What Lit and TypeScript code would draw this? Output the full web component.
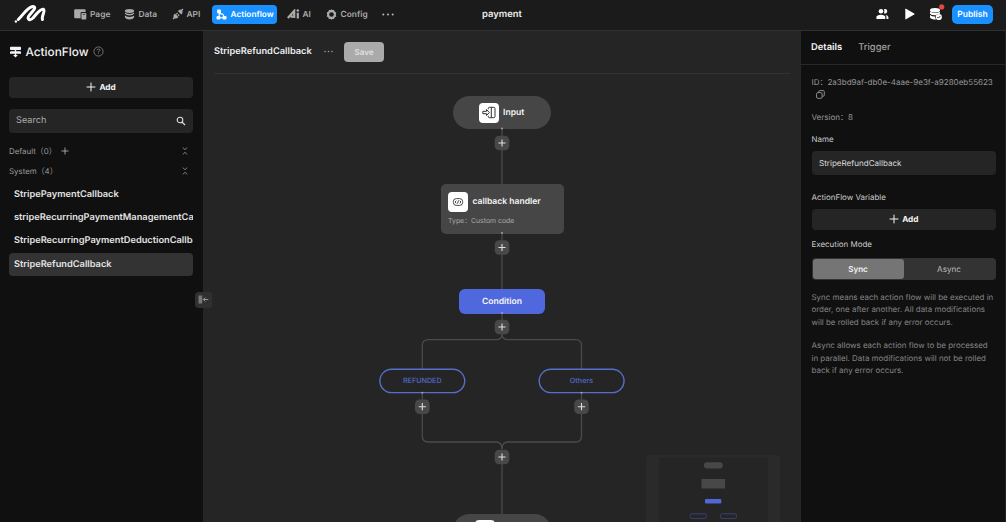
import { LitElement, html, svg, css } from "lit";
import { customElement, state } from "lit/decorators.js";
import { classMap } from "lit/directives/class-map.js";

const plus = (cls = "") => html`<svg class="plus ${cls}" viewBox="0 0 10 10"><path d="M5 .6V9.4M.6 5H9.4" stroke="currentColor" fill="none" /></svg>`;

const icons: Record<string, unknown> = {
  page: html`<svg width="13" height="11" viewBox="0 0 13 11" fill="#aaa"><path d="M1.2.3H10.6Q11.6.3 11.6 1.3V3H7.8Q6.6 3 6.6 4.2V9.2H1.2Q.2 9.2.2 8.200V1.300Q.2.3 1.200.3Z" /><path fill-rule="evenodd" d="M8.200 4H11.500Q12.300 4 12.300 4.800V9.800Q12.300 10.600 11.500 10.600H8.200Q7.400 10.600 7.400 9.800V4.800Q7.400 4 8.200 4ZM8.900 5.200V6H10.800V5.200Z" /></svg>`,
  data: html`<svg width="11" height="11" viewBox="0 0 11 11" fill="#aaa"><ellipse cx="5.500" cy="2" rx="4.600" ry="1.900" /><path d="M.9 3.500Q2.300 4.900 5.500 4.900T10.100 3.500V4.700Q8.900 6.500 5.500 6.500T.9 4.700ZM.9 6.500Q2.300 7.900 5.500 7.900T10.100 6.500V8.600Q8.900 10.600 5.500 10.600T.9 8.600Z" /></svg>`,
  api: html`<svg width="12" height="12" viewBox="0 0 12 12"><path d="M1 11L2.300 9.700M9.700 2.300L11 1M4.300 6.300L5.600 5M5.900 7.800L7.200 6.500" stroke="#aaa" stroke-width="1.200" /><path fill="#aaa" d="M3 5.600L6.400 9Q4.700 11.200 2.500 10.400L1.500 9.400Q.9 7.300 3 5.600ZM5.900 3.100Q7.600.9 9.700 1.700L10.400 2.400Q11.100 4.600 9.200 6.400Z" /></svg>`,
  flow: html`<svg width="11" height="11" viewBox="0 0 11 11"><path d="M3.200 3V8.700H8M3.200 4.600Q7.500 4.300 7.800 7.500" fill="none" stroke="#fff" stroke-width="1.100" /><g fill="#fff"><rect x="1" y=".6" width="4" height="3.600" rx="1" /><rect x=".5" y="7" width="4" height="3.500" rx="1" /><rect x="6.500" y="7" width="4" height="3.500" rx="1" /></g></svg>`,
  ai: html`<svg width="13" height="10" viewBox="0 0 13 10"><path d="M.8 9L7.200 1.900V9M3.600 7.600H6" fill="none" stroke="#aaa" stroke-width="2.200" /><path d="M10.800 3.700V9.500" stroke="#aaa" stroke-width="2.200" /><circle cx="10.800" cy="1.500" r="1.300" fill="#aaa" /></svg>`,
  config: html`<svg width="11" height="11" viewBox="0 0 11 11"><path d="M2.900 1L4.600 1L5.500.3L6.400 1H8.100L8.700 2.700L10.300 3.500L9.800 5.500L10.300 7.500L8.700 8.300L8.100 10H6.400L5.500 10.700L4.600 10H2.900L2.300 8.300L.7 7.500L1.200 5.500L.7 3.500L2.300 2.700Z" fill="#aaa" /><circle cx="5.500" cy="5.500" r="2.300" fill="#1b1b1b" /></svg>`,
};

const collapse = html`<svg class="collapse" width="6" height="8" viewBox="0 0 6 8"><path d="M.7.5L3 2.700L5.300.5M.7 7.500L3 5.300L5.300 7.500" fill="none" stroke="#999" stroke-width=".8" /></svg>`;

interface Spot { x: number; y: number }
const addSpots: Spot[] = [
  { x: 502, y: 143 }, { x: 502, y: 247.500 }, { x: 502, y: 327 },
  { x: 422.300, y: 406.700 }, { x: 581.500, y: 406.700 }, { x: 502, y: 457 },
];
const ports: Spot[] = [
  { x: 502, y: 128.500 }, { x: 502, y: 233 }, { x: 502, y: 313 },
  { x: 422.300, y: 392.700 }, { x: 581.500, y: 392.700 },
];

@customElement("app-root")
export class AppRoot extends LitElement {
  @state() private selected = 3;
  @state() private mode = "Sync";

  private nav = [
    ["page", "Page"], ["data", "Data"], ["api", "API"],
    ["flow", "Actionflow"], ["ai", "AI"], ["config", "Config"],
  ];
  private flows = [
    "StripePaymentCallback", "stripeRecurringPaymentManagementCallback",
    "StripeRecurringPaymentDeductionCallback", "StripeRefundCallback",
  ];

  static styles = css`
    :host { display: flex; flex-direction: column; width: 100%; height: 522px; overflow: hidden; background: #101010; color: #eee; text-rendering: geometricPrecision;
      font-family: Inter, "Noto Sans CJK SC", sans-serif; font-size: 8.5px; line-height: 12px; }
    * { box-sizing: border-box; }
    svg { display: block; flex: none; }
    header { flex: none; display: flex; align-items: center; height: 31px; padding-bottom: 2px; background: #1b1b1b; border-bottom: 1px solid #303030; white-space: nowrap; }
    .logo { margin-left: 14px; width: 33px; }
    .item { display: flex; align-items: center; height: 19px; gap: 3px; color: #a9a9a9; font-weight: 600; font-size: 8.400px; border-radius: 4px; }
    .item span, .title, .publish span, .save span { padding-top: 1px; }
    .item.page { margin-left: 27px; width: 50px; }
    .item.data { width: 48px; gap: 3.500px; }
    .item.api { width: 39px; gap: 2.500px; }
    .item.flow { width: 65px; padding-left: 4px; gap: 4px; margin-left: .5px; background: #1890ff; color: #fff; font-size: 8.300px; }
    .item.ai { margin-left: 10px; width: 39px; gap: 3px; }
    .item.config { width: 56px; gap: 4px; }
    .title { margin-left: 88.500px; width: 60px; font-size: 9.400px; font-weight: 600; color: #eee; }
    .tools { display: flex; align-items: center; margin-left: auto; padding-right: 13px; }
    .publish { display: flex; align-items: center; justify-content: center; width: 41px; height: 19px; border-radius: 5px; background: #1890ff; color: #fff; font-weight: 600; font-size: 8.500px; margin-left: 7px; }
    .body { flex: 1; display: flex; min-height: 0; }
    .left { flex: none; width: 203px; padding: 13px 10.500px 0 9px; display: flex; flex-direction: column; }
    .heading { display: flex; align-items: center; height: 15px; font-size: 11.800px; font-weight: 500; color: #f3f3f3; }
    .heading .label { margin: 0 5px 0 3.500px; width: 62px; white-space: nowrap; }
    .button { flex: none; display: flex; align-items: center; justify-content: center; gap: 3.500px; height: 21.500px; border-radius: 4px; background: #252525; color: #f5f5f5; font-weight: 700; font-size: 8.200px; }
    .plus { width: 10px; height: 10px; stroke-width: 1; }
    .left .button { margin-top: 17.500px; }
    .search { display: flex; align-items: center; justify-content: space-between; height: 24px; margin: 10.500px 0 8px; padding: 0 7px; border-radius: 4px; background: #252525; color: #aaa; font-size: 9.200px; }
    .search span { padding-top: 1px; }
    .group { display: flex; align-items: center; height: 20px; color: #9b9b9b; font-size: 7.900px; }
    .group .plus { width: 8px; height: 8px; margin-left: 4px; color: #bbb; }
    .group .collapse { margin-left: auto; margin-right: 5px; }
    .flows { margin-top: 2px; }
    .entry { height: 23.400px; line-height: 24.400px; padding-left: 5px; overflow: hidden; white-space: nowrap; border-radius: 4px; font-size: 9.250px; font-weight: 600; color: #e4e4e4; }
    .entry.on { background: #333; }
    .main { flex: 1; position: relative; min-width: 0; background: #252525; overflow: hidden; }
    .bar { display: flex; align-items: center; height: 42.500px; margin: 0 10px 0 11px; border-bottom: 1px solid #333; font-size: 9.280px; font-weight: 600; color: #eee; }
    .bar .name { width: 109.500px; padding-top: 1px; white-space: nowrap; }
    .save { display: flex; align-items: center; justify-content: center; width: 40px; height: 20px; margin-left: 11.500px; border-radius: 4px; background: #aaa; color: #ddd; font-size: 8px; font-weight: 700; }
    .canvas { position: absolute; left: -203px; top: -31px; width: 1006px; height: 522px; pointer-events: none; }
    .wires { position: absolute; inset: 0; }
    .node { position: absolute; display: flex; align-items: center; background: #464646; font-weight: 600; color: #f5f5f5; white-space: nowrap; }
    .tile { flex: none; display: flex; align-items: center; justify-content: center; width: 20px; height: 20px; border-radius: 4px; background: #fff; }
    .node b { font-weight: 600; padding-top: 1px; }
    .input { left: 453px; top: 96px; width: 98px; height: 33px; border-radius: 17px; padding-left: 25.500px; gap: 4.500px; font-size: 8.600px; }
    .handler { left: 440.500px; top: 184px; width: 123px; height: 49.500px; border-radius: 5px; flex-direction: column; align-items: flex-start; padding: 7.500px 7.500px 0; font-size: 8.550px; }
    .row { display: flex; align-items: center; gap: 4.500px; }
    .kind { margin-top: 3.500px; font-size: 6.900px; font-weight: 400; color: #aaa; }
    .condition { left: 459px; top: 289px; width: 86px; height: 24.500px; border-radius: 6px; justify-content: center; background: #4f68de; font-size: 8.600px; }
    .branch { top: 368.500px; width: 86px; height: 24.500px; justify-content: center; background: none; color: #4c62b9; font-size: 7.200px; }
    .refunded { left: 379.300px; }
    .others { left: 538.500px; }
    .output { left: 453px; top: 513.500px; width: 98px; height: 33px; border-radius: 17px; padding-left: 22px; }
    .mini { position: absolute; left: 646px; top: 455px; width: 134px; height: 72px; background: #2a2a2a; border-radius: 3px; }
    .handle { position: absolute; left: 195px; top: 291.500px; width: 16.500px; height: 16.500px; border-radius: 4px; background: #303030; display: flex; align-items: center; justify-content: center; }
    .right { flex: none; width: 206px; border-left: 1px solid #272727; border-right: 1px solid #242424; display: flex; flex-direction: column; }
    .tabs { display: flex; gap: 16px; height: 34px; padding: 11px 10px 0; border-bottom: 1.500px solid #282828; font-size: 9.400px; font-weight: 500; color: #a0a0a0; }
    .tabs .on { color: #f5f5f5; font-weight: 600; }
    .details { display: flex; flex-direction: column; padding: 11px 9.500px 0 10.500px; color: #999; font-size: 8.030px; }
    .id { white-space: nowrap; }
    .copy { margin: 2px 0 0 4px; }
    .version { margin-top: 11.500px; }
    .caption { color: #ccc; font-size: 7.950px; }
    .caption.name { margin-top: 10px; }
    .field { display: flex; align-items: center; height: 24px; margin: 6px 0 16px; padding-left: 7.500px; border-radius: 4px; background: #252525; color: #ddd; font-size: 8.050px; }
    .right .button { margin: 6px 0 8px; }
    .toggle { display: flex; height: 21.500px; margin-top: 8px; padding: 1px; border-radius: 4px; background: #333; color: #bbb; font-size: 8.100px; }
    .toggle div { flex: 1; display: flex; align-items: center; justify-content: center; border-radius: 3px; }
    .toggle .on { background: #757575; color: #f3f3f3; font-weight: 600; }
    .note { margin-top: 11px; line-height: 12.550px; color: #858585; font-size: 7.950px; white-space: nowrap; }
  `;

  private header() {
    return html`<header>
      <svg class="logo" width="33" height="21" viewBox="0 0 33 21" fill="none" stroke="#fff" stroke-linecap="round" stroke-linejoin="round">
        <path stroke-width="3" d="M4.300 15.500C10 10 14 2.300 19 2.400C24 3 17 8.500 14.500 12.500C13 15.800 16 16.800 19 14C22.500 10 26 4.500 29.300 5.200C32 6.500 27 12.500 28.500 15.500" />
        <circle cx="1.900" cy="17.500" r="1.200" stroke="none" fill="#fff" />
      </svg>
      ${this.nav.map(([id, label]) => html`<div class="item ${id}">${icons[id]}<span>${label}</span></div>`)}
      <svg width="12" height="3" viewBox="0 0 12 3" fill="#bbb"><circle cx="1.300" cy="1.500" r="1" /><circle cx="6" cy="1.500" r="1" /><circle cx="10.700" cy="1.500" r="1" /></svg>
      <div class="title">payment</div>
      <div class="tools">
        <svg width="69" height="20" viewBox="0 0 69 20" fill="#fff">
          <circle cx="5" cy="7.300" r="2.300" /><path d="M.4 15V13Q.8 11 5 10.800Q9 11 9.300 13V15Z" />
          <path d="M8 5.200A2.300 2.300 0 1 1 8 9.400Q9 7.300 8 5.200ZM9.500 11Q12.300 11.400 12.400 13V15H10.500V13Q10.400 11.800 9.500 11Z" />
          <path d="M29.300 5.300Q29.300 4.500 30 4.800L38.200 9.400Q39 10 38.200 10.600L30 15.300Q29.300 15.600 29.300 14.700Z" />
          <ellipse cx="59" cy="6.300" rx="5" ry="2.200" /><path d="M54 7.800Q58 10 64 7.900V9.700Q61 9.600 59.800 11.300Q55.500 11.500 54 9.700ZM54 11Q56 12.500 59 12.500Q59 14.400 60.300 15.500Q55 15.500 54 13.500Z" />
          <circle cx="62.800" cy="13" r="3.100" /><path d="M61.300 13L62.400 14.100L64.400 12" fill="none" stroke="#1b1b1b" stroke-width=".9" />
          <circle cx="65.700" cy="2.900" r="2.600" fill="#e5463f" />
        </svg>
        <div class="publish"><span>Publish</span></div>
      </div>
    </header>`;
  }

  private sidebar() {
    return html`<aside class="left">
      <div class="heading">
        <svg width="13" height="12" viewBox="0 0 13 12" fill="#f3f3f3"><rect x="1" y=".8" width="11" height="3.300" rx=".8" /><path d="M5.800 3H7.200V7.500H5.800ZM2.500 5.200H11Q12 5.200 12 6V7.700H1V6Q1 5.200 2.500 5.200ZM5.800 7H7.200V9H8.900L6.500 11.500L4.100 9H5.800Z" /></svg>
        <span class="label">ActionFlow</span>
        <svg width="11" height="11" viewBox="0 0 11 11" fill="none" stroke="#888" stroke-width=".8"><circle cx="5.500" cy="5.500" r="4.600" /><path d="M4 4.300Q4.100 3 5.500 3Q7 3.100 7 4.300Q6.900 5.100 5.500 5.700V6.500M5.500 7.300V8.100" /></svg>
      </div>
      <div class="button">${plus()}<span>Add</span></div>
      <div class="search"><span>Search</span><svg width="10" height="10" viewBox="0 0 10 10" fill="none" stroke="#ddd"><circle cx="4" cy="4" r="2.800" stroke-width="1.100" /><path d="M6 6L9 9" stroke-width="1.300" /></svg></div>
      <div class="group"><span>Default（0）</span>${plus()}${collapse}</div>
      <div class="group"><span>System（4）</span>${collapse}</div>
      <div class="flows">
        ${this.flows.map((f, i) => html`<div class=${classMap({ entry: true, on: i === this.selected })} @click=${() => (this.selected = i)}>${f}</div>`)}
      </div>
    </aside>`;
  }

  private canvas() {
    return html`<div class="canvas">
      <svg class="wires" width="1006" height="522" viewBox="0 0 1006 522" fill="none" stroke="#4b4b4b" stroke-width="1.300">
        <path d="M502 129V184M502 233V289M502 313V334M502 450V514" />
        <path d="M502 334Q502 339.700 496 339.700H428.300Q422.300 339.700 422.300 345.700V436Q422.300 442 428.300 442H496Q502 442 502 449" />
        <path d="M502 334Q502 339.700 508 339.700H575.500Q581.500 339.700 581.500 345.700V436Q581.500 442 575.500 442H508Q502 442 502 449" />
        <g fill="#252525" stroke="#566fcb" stroke-width="1.400"><rect x="379.900" y="369.200" width="84.800" height="23.400" rx="11.700" /><rect x="539.200" y="369.200" width="84.800" height="23.400" rx="11.700" /></g>
      </svg>
      <div class="node input"><span class="tile"><svg width="14" height="13" viewBox="0 0 14 13" fill="none" stroke="#333" stroke-width="1"><path d="M.8 5.300H4.500V3.500L7.300 6.500L4.500 9.500V7.700H.8ZM6.300 3.300V2.500Q6.300 1.300 7.500 1.300H11.700Q13 1.300 13 2.500V10.500Q13 11.700 11.700 11.700H7.500Q6.300 11.700 6.300 10.500V9.700M9.300 1.500V11.500" /></svg></span><b>Input</b></div>
      <div class="node handler">
        <div class="row"><span class="tile"><svg width="12" height="10" viewBox="0 0 12 10" fill="none" stroke="#333" stroke-width=".9"><rect x="1.300" y="1.600" width="9.400" height="6.800" rx="3" /><path d="M4.300 3.700L3 5L4.300 6.300M7.700 3.700L9 5L7.700 6.300M6.600 3.400L5.400 6.600" /></svg></span>callback handler</div>
        <div class="kind">Type：Custom code</div>
      </div>
      <div class="node condition"><b>Condition</b></div>
      <div class="node branch refunded">REFUNDED</div>
      <div class="node branch others">Others</div>
      <div class="node output"><span class="tile"></span></div>
      <svg class="wires" width="1006" height="522" viewBox="0 0 1006 522">
        ${ports.map((p) => svg`<circle cx=${p.x} cy=${p.y} r=".9" fill="#aaa" />`)}
        ${addSpots.map((p) => svg`<rect x=${p.x - 7.3} y=${p.y - 7.3} width="14.600" height="14.600" rx="4.500" fill="#484848" /><path d="M${p.x - 3.6} ${p.y}h7.200M${p.x} ${p.y - 3.6}v7.200" stroke="#ddd" stroke-width="1.100" />`)}
      </svg>
      <div class="mini"><svg width="134" height="72" viewBox="646 455 134 72">
        <rect x="659" y="457.500" width="109" height="70" fill="#252525" />
        <rect x="704" y="462.300" width="18.700" height="6.300" rx="3" fill="#484848" /><rect x="701.500" y="479" width="23.500" height="9.500" fill="#484848" />
        <rect x="705" y="499" width="16.300" height="4.500" rx="1" fill="#5067da" />
        <rect x="690.300" y="513.800" width="16" height="4.800" rx="1.700" fill="#25252d" stroke="#424270" stroke-width=".9" /><rect x="720.500" y="513.800" width="16" height="4.800" rx="1.700" fill="#25252d" stroke="#424270" stroke-width=".9" />
      </svg></div>
    </div>`;
  }

  private details() {
    return html`<aside class="right">
      <div class="tabs"><span class="on">Details</span><span>Trigger</span></div>
      <div class="details">
        <div class="id">ID：2a3bd9af-db0e-4aae-9e3f-a9280eb55623</div>
        <svg class="copy" width="9" height="9" viewBox="0 0 9 9" fill="none" stroke="#999" stroke-width=".9"><rect x=".6" y="2.600" width="5.500" height="5.700" rx="1.200" /><path d="M2.700 2.500V1.600Q2.700.6 3.700.6H7.200Q8.300.6 8.300 1.600V5.100Q8.300 6.200 7.200 6.200H6.300" /></svg>
        <div class="version">Version：8</div>
        <div class="caption name">Name</div>
        <div class="field">StripeRefundCallback</div>
        <div class="caption">ActionFlow Variable</div>
        <div class="button">${plus()}<span>Add</span></div>
        <div class="caption">Execution Mode</div>
        <div class="toggle">${["Sync", "Async"].map((m) => html`<div class=${classMap({ on: m === this.mode })} @click=${() => (this.mode = m)}>${m}</div>`)}</div>
        <div class="note">Sync means each action flow will be executed in<br />order, one after another. All data modifications<br />will be rolled back if any error occurs.</div>
        <div class="note">Async allows each action flow to be processed<br />in parallel. Data modifications will not be rolled<br />back if any error occurs.</div>
      </div>
    </aside>`;
  }

  render() {
    return html`${this.header()}
      <div class="body">
        ${this.sidebar()}
        <main class="main">
          <div class="bar"><span class="name">StripeRefundCallback</span>
            <svg width="9" height="3" viewBox="0 0 9 3" fill="#999"><circle cx="1" cy="1.500" r=".8" /><circle cx="4.500" cy="1.500" r=".8" /><circle cx="8" cy="1.500" r=".8" /></svg>
            <span class="save"><span>Save</span></span></div>
          ${this.canvas()}
        </main>
        ${this.details()}
      </div>
      <div class="handle"><svg width="11" height="9" viewBox="0 0 11 9"><rect x=".5" y=".5" width="3.700" height="8" fill="#777" /><path d="M5.300 4.500H10.300M7.300 2.500L5.300 4.500L7.300 6.500" fill="none" stroke="#999" stroke-width="1" /></svg></div>`;
  }
}
